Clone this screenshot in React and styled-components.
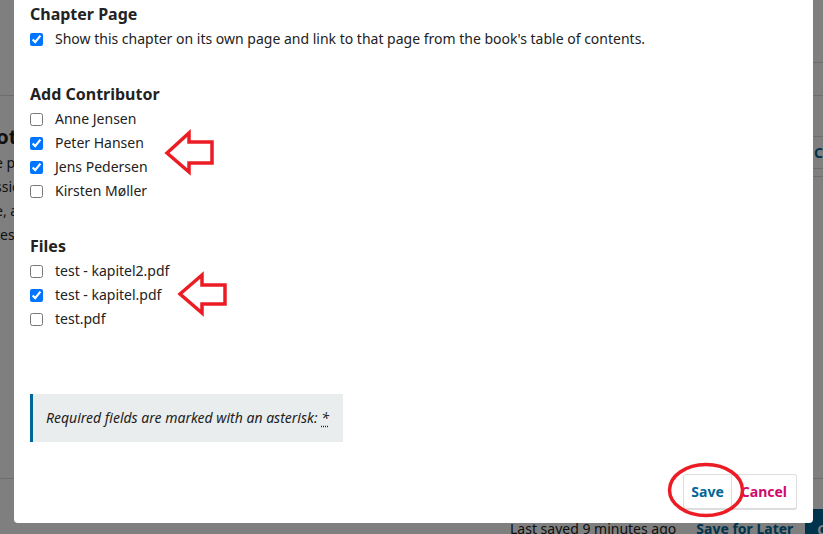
import React from 'react';
import styled, { createGlobalStyle } from 'styled-components';

const GlobalStyle = createGlobalStyle`
  html, body {
    margin: 0;
    padding: 0;
    height: 100%;
    overflow: hidden;
  }
  body {
    font-family: "Noto Sans", "Open Sans", sans-serif;
    color: #222;
    background: #fff;
  }
  #root {
    height: 100%;
  }
  *, *::before, *::after {
    box-sizing: border-box;
  }
`;

// --- PAGE BEHIND THE MODAL --- //
const Page = styled.div`
  position: relative;
  height: 100vh;
  overflow: hidden;
  background: #fff;
  display: flex;
  flex-direction: column;
`;

const TopBar = styled.header`
  flex: none;
  height: 96px;
  border-bottom: 1px solid #ddd;
  display: flex;
  justify-content: flex-end;
`;

const TabStrip = styled.div`
  width: 140px;
  height: 63px;
  border-bottom: 1px solid #ddd;
`;

const Content = styled.main`
  flex: none;
  height: 382px;
  display: grid;
  grid-template-columns: 14px 794px 1fr;
  overflow: hidden;
`;

const LeftColumn = styled.section`
  padding-top: 27px;
  white-space: nowrap;
  overflow: hidden;
`;

const PageTitle = styled.h2`
  margin: 0 0 0 -20px;
  font-size: 20px;
  line-height: 28px;
  font-weight: 700;
`;

const PageLine = styled.div`
  margin-left: -5px;
  font-size: 14px;
  line-height: 24px;
`;

const RightColumn = styled.aside`
  grid-column: 3;
  padding-top: 40px;
  white-space: nowrap;
  overflow: hidden;
`;

const PanelHeader = styled.div`
  height: 33px;
  border-top: 1px solid #ddd;
  border-bottom: 1px solid #ddd;
  display: flex;
  align-items: center;
  padding-left: 6px;
  font-size: 14px;
  font-weight: 700;
  color: #006798;
`;

const PanelRule = styled.div`
  margin-top: 7px;
  border-top: 1px solid #ddd;
`;

const Footer = styled.footer`
  flex: none;
  border-top: 1px solid #ddd;
  padding: 30px 0 0 510px;
  display: flex;
  align-items: center;
  white-space: nowrap;
`;

const FooterText = styled.span`
  font-size: 14px;
  line-height: 36px;
`;

const FooterDivider = styled.span`
  width: 1px;
  height: 22px;
  margin: 0 ${p => p.$after}px 0 ${p => p.$before}px;
  background: #ccc;
`;

const FooterLink = styled.span`
  font-size: 14px;
  font-weight: 700;
  line-height: 36px;
  color: #006798;
`;

const PrimaryButton = styled.span`
  height: 40px;
  padding: 0 12px;
  display: flex;
  align-items: center;
  background: #006798;
  color: #fff;
  font-size: 14px;
  font-weight: 700;
`;

// --- MODAL --- //
const Overlay = styled.div`
  position: fixed;
  inset: 0;
  background: rgba(0, 0, 0, 0.5);
`;

const Modal = styled.div`
  position: absolute;
  top: 0;
  left: 14px;
  width: 799px;
  height: 523px;
  background: #fff;
  border-radius: 0 0 4px 4px;
  display: flex;
  flex-direction: column;
`;

const ModalBody = styled.div`
  padding: 3px 16px 0;
  display: flex;
  flex-direction: column;
  align-items: flex-start;
`;

const Fieldset = styled.fieldset`
  border: none;
  margin: 0 0 ${p => (p.$last ? 0 : 32)}px;
  padding: 0;
  min-width: 0;
`;

const Legend = styled.div`
  font-size: 16px;
  line-height: 22px;
  font-weight: 700;
  margin-bottom: 2px;
`;

const OptionRow = styled.label`
  display: flex;
  align-items: center;
  gap: 12px;
  height: 24px;
  font-size: 14px;
  line-height: 24px;
  color: #222;
`;

const Checkbox = styled.input.attrs({ type: 'checkbox' })`
  margin: 0;
  width: 13px;
  height: 13px;
  flex: none;
`;

const Notice = styled.div`
  margin-top: 63px;
  padding: 14px 14px 14px 13px;
  border-left: 3px solid #006798;
  background: #eaedee;
  font-size: 14px;
  line-height: 20px;
  font-style: italic;
`;

const Required = styled.abbr`
  text-decoration: underline dotted;
  text-underline-offset: 3px;
  cursor: help;
`;

const ButtonRow = styled.div`
  margin-top: auto;
  padding: 0 16px 14px;
  display: flex;
  justify-content: flex-end;
`;

const Button = styled.button`
  height: 35px;
  padding: 0 ${p => (p.$warn ? 9 : 7)}px;
  background: #fff;
  border: 1px solid #ddd;
  border-left-width: ${p => (p.$joined ? 0 : 1)}px;
  border-radius: ${p => (p.$joined ? '0 3px 3px 0' : '3px 0 0 3px')};
  box-shadow: 0 1px 0 #ddd;
  font-family: "Noto Sans", "Open Sans", sans-serif;
  font-size: 14px;
  font-weight: 700;
  color: ${p => (p.$warn ? '#d00a6c' : '#006798')};
  cursor: pointer;
`;

// --- RED ANNOTATIONS --- //
const Annotations = styled.svg`
  position: absolute;
  inset: 0;
  pointer-events: none;
`;

const contributors = [
  { name: 'Anne Jensen', checked: false },
  { name: 'Peter Hansen', checked: true },
  { name: 'Jens Pedersen', checked: true },
  { name: 'Kirsten Møller', checked: false },
];

const files = [
  { name: 'test - kapitel2.pdf', checked: false },
  { name: 'test - kapitel.pdf', checked: true },
  { name: 'test.pdf', checked: false },
];

function Option({ label, checked }) {
  return (
    <OptionRow>
      <Checkbox defaultChecked={checked} />
      {label}
    </OptionRow>
  );
}

export default function App() {
  return (
    <>
      <GlobalStyle />
      <Page>
        <TopBar>
          <TabStrip />
        </TopBar>
        <Content>
          <LeftColumn>
            <PageTitle>Notifications</PageTitle>
            <PageLine>e page</PageLine>
            <PageLine>ssions</PageLine>
            <PageLine>e, add</PageLine>
            <PageLine>tes</PageLine>
          </LeftColumn>
          <RightColumn>
            <PanelHeader>Chapters</PanelHeader>
            <PanelRule />
          </RightColumn>
        </Content>
        <Footer>
          <FooterText>Last saved 9 minutes ago</FooterText>
          <FooterDivider $before={12} $after={8} />
          <FooterLink>Save for Later</FooterLink>
          <FooterDivider $before={10} $after={2} />
          <PrimaryButton>Continue</PrimaryButton>
        </Footer>
      </Page>

      <Overlay>
        <Modal role="dialog">
          <ModalBody>
            <Fieldset>
              <Legend>Chapter Page</Legend>
              <Option
                checked
                label="Show this chapter on its own page and link to that page from the book's table of contents."
              />
            </Fieldset>
            <Fieldset>
              <Legend>Add Contributor</Legend>
              {contributors.map(c => (
                <Option key={c.name} label={c.name} checked={c.checked} />
              ))}
            </Fieldset>
            <Fieldset $last>
              <Legend>Files</Legend>
              {files.map(f => (
                <Option key={f.name} label={f.name} checked={f.checked} />
              ))}
            </Fieldset>
            <Notice>
              Required fields are marked with an asterisk:{' '}
              <Required title="Required">*</Required>
            </Notice>
          </ModalBody>
          <ButtonRow>
            <Button>Save</Button>
            <Button $warn $joined>
              Cancel
            </Button>
          </ButtonRow>
        </Modal>

        <Annotations width="823" height="534" viewBox="0 0 823 534">
          <g fill="none" stroke="#ec1c24" strokeWidth="3.5" strokeLinejoin="miter">
            <polygon points="167,153 189,133 189,142 212,142 212,163 189,163 189,172" />
            <polygon points="180,294 202,275 202,285 225,285 225,304 202,304 202,313" />
            <ellipse cx="706" cy="490" rx="36.5" ry="25.5" />
          </g>
        </Annotations>
      </Overlay>
    </>
  );
}
